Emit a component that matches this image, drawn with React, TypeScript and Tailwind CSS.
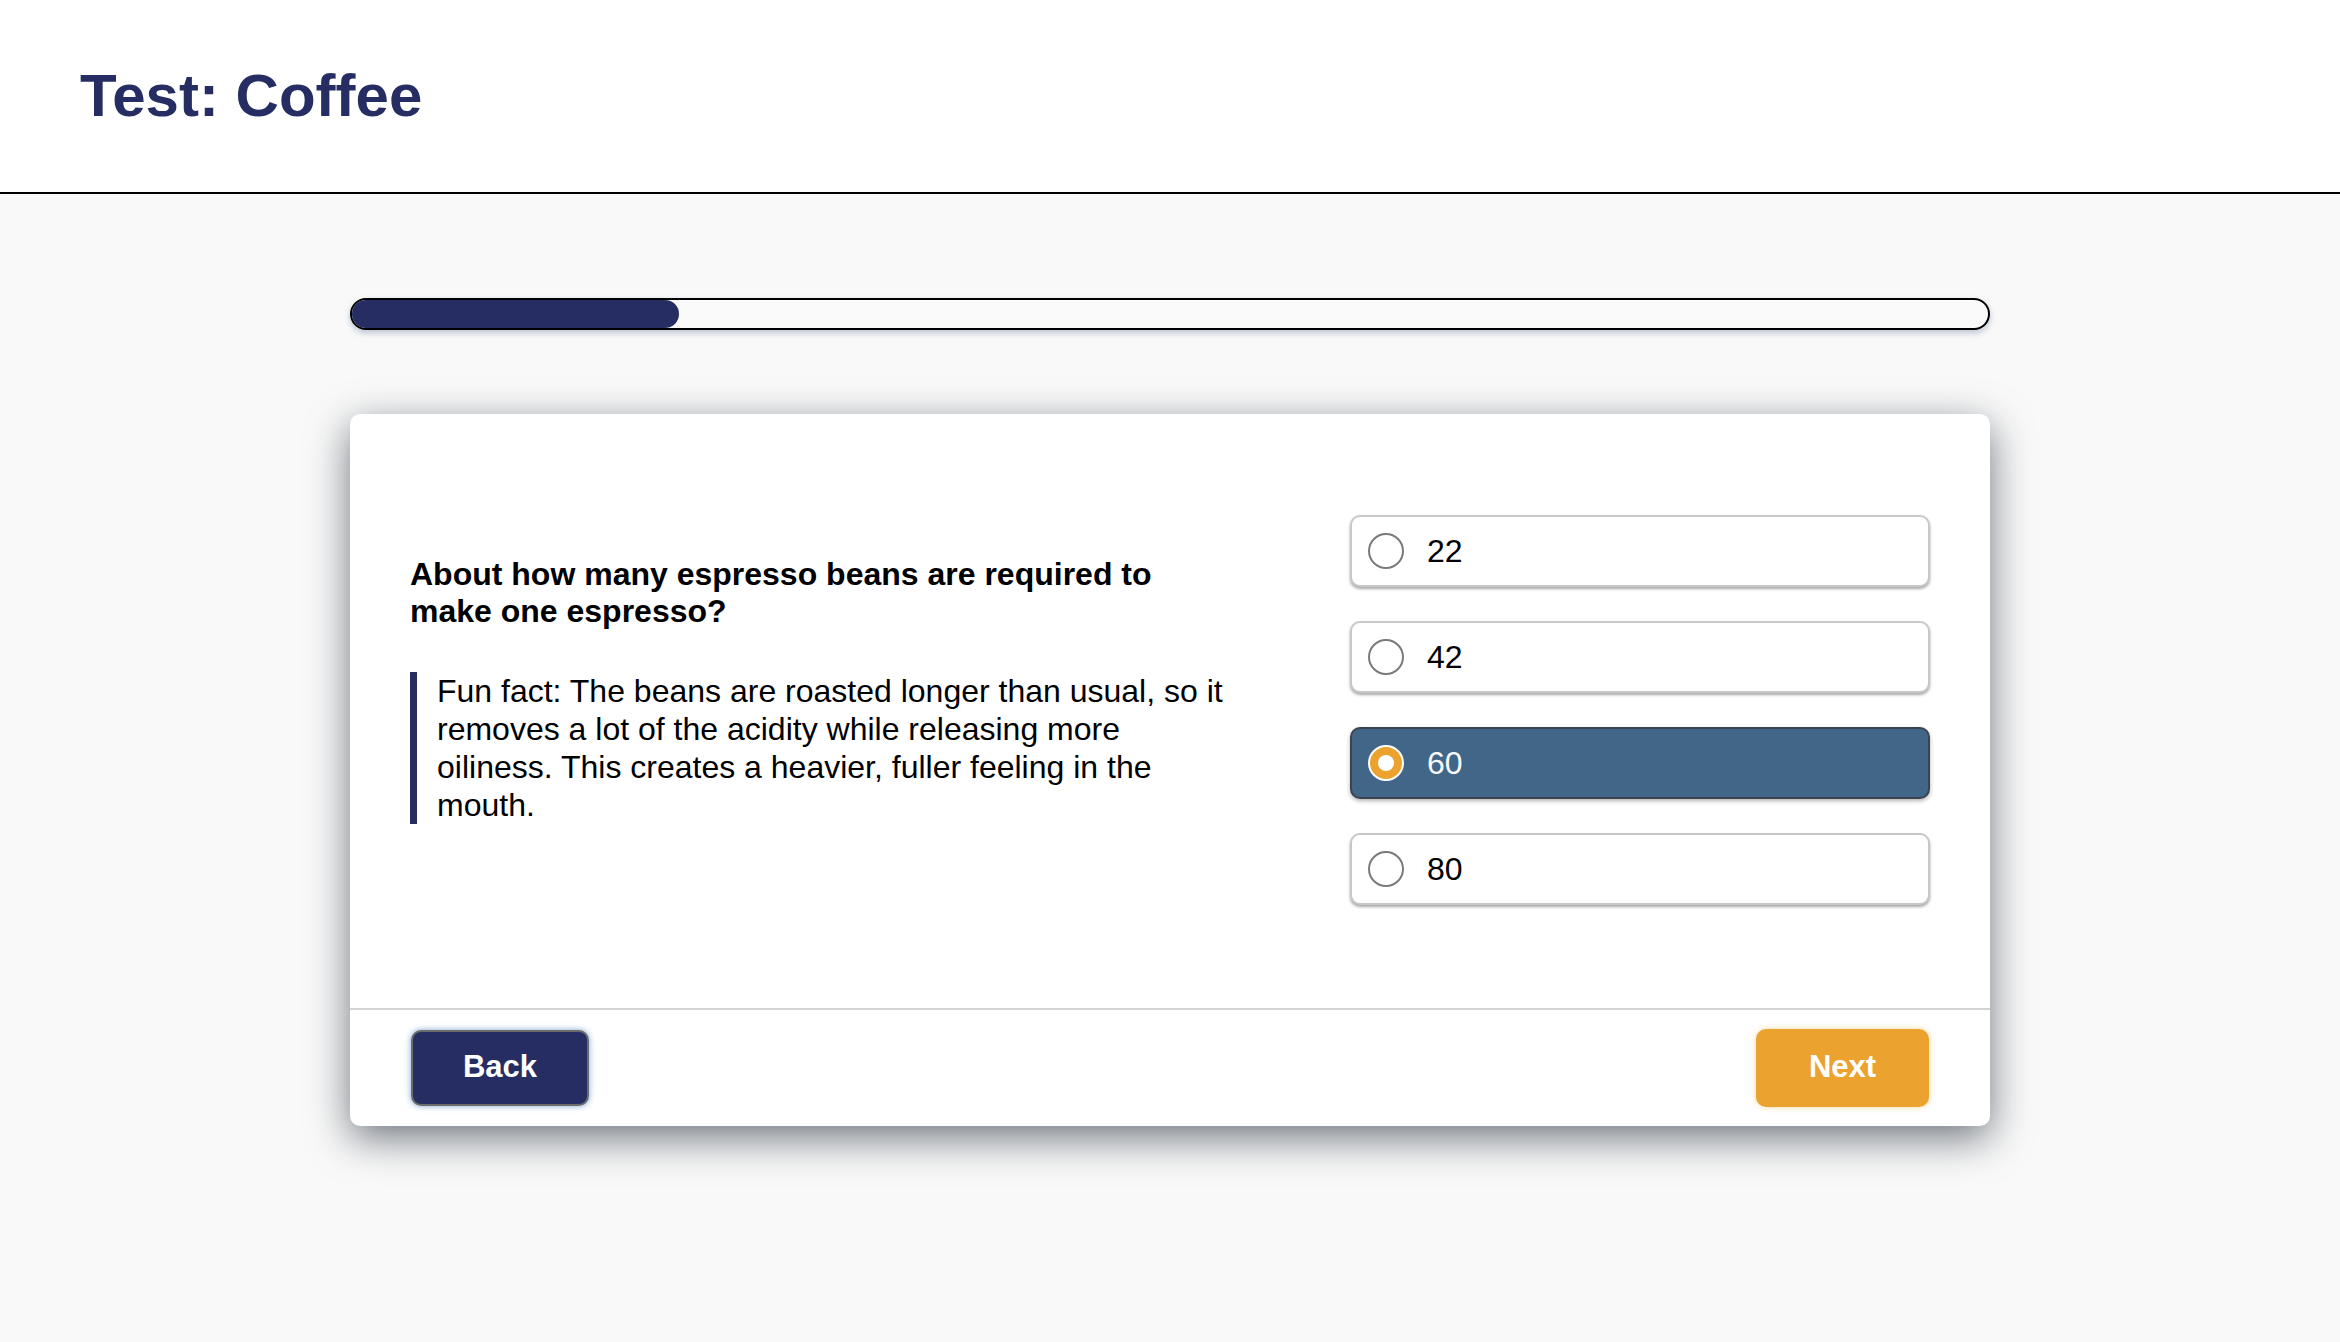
import React from "react";

const options = ["22", "42", "60", "80"];

function Radio({ selected }: { selected: boolean }) {
  if (selected) {
    return (
      <span className="flex h-[36px] w-[36px] shrink-0 items-center justify-center rounded-full border-2 border-white bg-[#eca22f]">
        <span className="h-[16px] w-[16px] rounded-full bg-white" />
      </span>
    );
  }
  return <span className="h-[36px] w-[36px] shrink-0 rounded-full border-2 border-[#7a7a7a] bg-white" />;
}

export default function App() {
  const selected = "60";
  return (
    <div className="min-h-screen bg-[#f9f9f9] font-['Liberation_Sans',Arial,sans-serif]">
      <header className="flex h-[194px] items-center border-b-2 border-black bg-white px-[80px]">
        <h1 className="text-[60px] font-bold leading-none text-[#252d62]">Test: Coffee</h1>
      </header>

      <main className="mx-auto w-[1640px] pt-[104px] pb-[100px]">
        <div className="h-[32px] w-full rounded-full border-2 border-black bg-[#fafafa] shadow-[0_3px_6px_rgba(70,100,140,0.35)]">
          <div className="h-full w-[20%] rounded-full bg-[#252d62]" />
        </div>

        <section className="mt-[84px] overflow-hidden rounded-[10px] bg-white shadow-[0_12px_40px_rgba(20,30,45,0.6)]">
          <div className="flex h-[594px] items-center justify-between px-[60px]">
            <div className="w-[822px] pb-[43px] text-black">
              <h2 className="text-[32px] font-bold leading-[37px]">
                About how many espresso beans are required to make one espresso?
              </h2>
              <blockquote className="mt-[42px] border-l-[7px] border-[#252d62] pl-[20px] text-[32px] leading-[38px]">
                Fun fact: The beans are roasted longer than usual, so it removes a lot of the acidity while releasing more oiliness. This creates a heavier, fuller feeling in the mouth.
              </blockquote>
            </div>

            <div className="mb-[3px] flex w-[580px] flex-col gap-[34px]">
              {options.map((o) => {
                const isSel = o === selected;
                return (
                  <div
                    key={o}
                    className={
                      isSel
                        ? "flex h-[72px] items-center gap-[23px] rounded-[10px] border-2 border-[#3b4350] bg-[#416687] pl-[16px] text-[32px] text-[#f7f9fb] shadow-[0_2px_4px_rgba(0,0,0,0.3)]"
                        : "flex h-[72px] items-center gap-[23px] rounded-[10px] border-2 border-[#c6c8cc] bg-white pl-[16px] text-[32px] text-black shadow-[0_2px_3px_rgba(0,0,0,0.35)]"
                    }
                  >
                    <Radio selected={isSel} />
                    <span>{o}</span>
                  </div>
                );
              })}
            </div>
          </div>

          <div className="flex h-[118px] items-center justify-between border-t-2 border-[#d4d4d4] px-[61px] pb-[1px]">
            <button className="h-[76px] w-[178px] rounded-[10px] border-2 border-[#6c6c6c] bg-[#252d62] text-[31px] font-bold text-white shadow-[0_0_6px_rgba(70,120,190,0.7)]">
              Back
            </button>
            <button className="h-[78px] w-[173px] rounded-[10px] bg-[#eca22f] text-[31px] font-bold text-white shadow-[0_0_6px_rgba(250,190,100,0.6)]">
              Next
            </button>
          </div>
        </section>
      </main>
    </div>
  );
}
